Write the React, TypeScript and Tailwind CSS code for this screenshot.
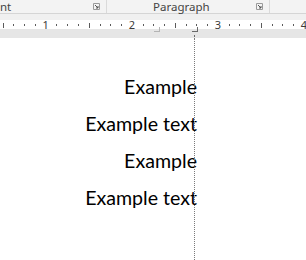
import React from 'react';

const INCH = 86.1;
const ORIGIN = -40.4;

function Ruler() {
    const ticks: React.ReactNode[] = [];
    for (let i = 1; i < 40; i++) {
        const x = ORIGIN + (i * INCH) / 8;
        if (x < 0 || x > 306) continue;
        if (i % 8 === 0) {
            ticks.push(
                <text key={i} x={x} y={9} textAnchor="middle" fontSize="11" fill="#3b3b3b" fontFamily="'Noto Sans', sans-serif">
                    {i / 8}
                </text>
            );
        } else if (i % 4 === 0) {
            ticks.push(<rect key={i} x={Math.round(x)} y={3} width={1} height={5} fill="#5a5a5a" />);
        } else {
            ticks.push(<rect key={i} x={Math.round(x)} y={4} width={1} height={2} fill="#5a5a5a" />);
        }
    }
    return (
        <svg width="306" height="18" className="block">
            <rect x="0" y="0" width="306" height="9" fill="#ffffff" />
            <rect x="0" y="9" width="306" height="9" fill="#e6e6e6" />
            {ticks}
            {/* left column marker */}
            <path d="M154 11h5v-4h1v5h-6z" fill="#b4b4b4" />
            {/* right indent marker */}
            <path d="M192 11h5v-4h1v5h-6z" fill="#6a6a6a" />
            <rect x="194" y="15" width="1" height="2" fill="#6a6a6a" />
        </svg>
    );
}

function Launcher() {
    return (
        <svg width="7" height="7" viewBox="0 0 7 7" className="block">
            <path d="M0.5 0.5h6v6" fill="none" stroke="#9a9a9a" />
            <path d="M0.5 0.5v6h6" fill="none" stroke="#9a9a9a" />
            <path d="M2 2l3 3M3 5h2v-2" fill="none" stroke="#555" />
        </svg>
    );
}

export default function App() {
    return (
        <div className="w-[306px] h-[260px] overflow-hidden bg-white relative">
            {/* Ribbon group labels */}
            <div className="flex h-[13px] bg-[#f3f3f3] font-['Noto_Sans',sans-serif] text-[11.5px] leading-[12px] text-[#444]">
                <div className="w-[107px] flex items-center justify-between pr-[6px] border-r border-[#dadada]">
                    <span>nt</span>
                    <Launcher />
                </div>
                <div className="w-[163px] flex items-center justify-between pl-[46px] pr-[6px] border-r border-[#dadada]">
                    <span>Paragraph</span>
                    <Launcher />
                </div>
            </div>
            <div className="h-px bg-[#d5d5d5]" />
            <div className="h-[6px] bg-[#f0f0f0]" />
            <Ruler />

            {/* Page */}
            <div className="pt-[30px] w-[197px] flex flex-col items-end font-['Lato',sans-serif] text-[19.6px] leading-[37px] text-black">
                <p>Example</p>
                <p>Example text</p>
                <p>Example</p>
                <p>Example text</p>
            </div>

            {/* column guide */}
            <div className="absolute left-[194px] top-[38px] bottom-0 border-l border-dotted border-[#7a7a7a]" />
        </div>
    );
}
